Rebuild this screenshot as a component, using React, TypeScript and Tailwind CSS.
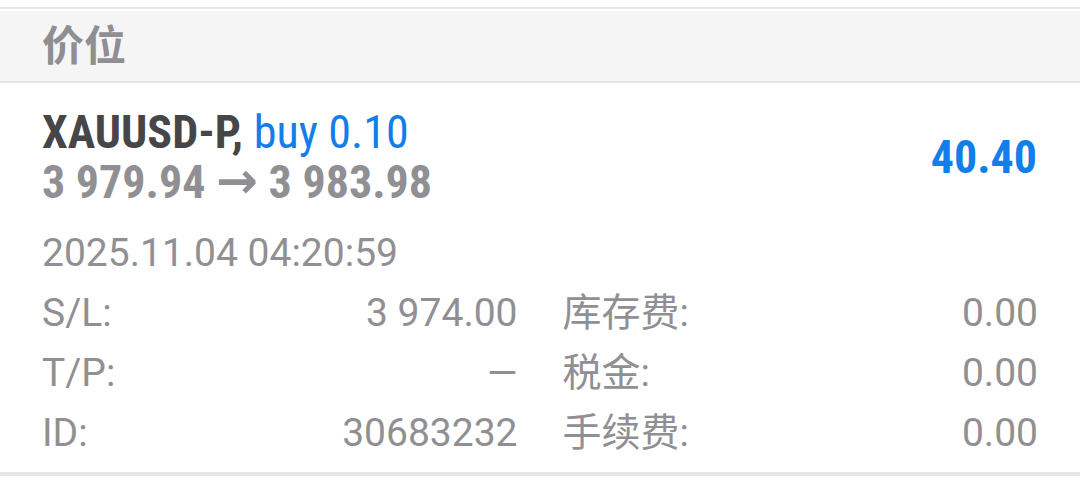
const ROWS = [
  { label: "S/L:", value: "3 974.00", label2: "库存费:", value2: "0.00" },
  { label: "T/P:", value: "—", label2: "税金:", value2: "0.00" },
  { label: "ID:", value: "30683232", label2: "手续费:", value2: "0.00" },
];

export default function App() {
  return (
    <div className="w-[1080px] h-[482px] bg-white overflow-hidden font-['Roboto','Noto_Sans_CJK_SC',sans-serif]">
      <div className="pt-[7px]">
        <div className="h-[2px] bg-[#e5e5e5]" />
        <div className="mt-[2px] h-[70px] bg-[#f5f5f5] px-[42px] flex items-center">
          <span className="text-[42px] leading-none font-bold text-[#8e8e93] font-['Noto_Sans_CJK_SC',sans-serif] -mt-[6px]">
            价位
          </span>
        </div>
        <div className="h-[2px] bg-[#e5e5e5]" />
      </div>

      <PositionCard />
    </div>
  );
}

function PositionCard() {
  return (
    <div className="px-[42px] pt-[24px]">
      <div className="flex items-center justify-between">
        <div className="font-['Roboto_Condensed','Roboto',sans-serif] font-stretch-condensed font-bold text-[46px] leading-[50px]">
          <div>
            <span className="text-[#464649]">XAUUSD-P,</span>{" "}
            <span className="text-[#137ee8] font-normal">buy 0.10</span>
          </div>
          <div className="text-[#909094]">
            3 979.94{" "}
            <span className="font-['DejaVu_Sans',sans-serif] font-stretch-normal text-[50px] leading-[0]">→</span>{" "}
            3 983.98
          </div>
        </div>
        <div className="font-['Roboto_Condensed','Roboto',sans-serif] font-stretch-condensed font-bold text-[46px] leading-[50px] text-[#137ee8] mr-px">
          40.40
        </div>
      </div>

      <div className="mt-[16px] text-[39px] leading-[60px] text-[#909094]">
        2025.11.04 04:20:59
      </div>

      <div className="grid grid-cols-2 gap-x-[45px] text-[39px] leading-[60px] text-[#909094]">
        {ROWS.map((r) => (
          <div key={r.label} className="contents">
            <div className="flex justify-between">
              <span>{r.label}</span>
              <span>{r.value}</span>
            </div>
            <div className="flex justify-between">
              <span>{r.label2}</span>
              <span>{r.value2}</span>
            </div>
          </div>
        ))}
      </div>

      <div className="mt-[9px] -mx-[42px] h-[4px] bg-[#e6e6e6]" />
    </div>
  );
}
